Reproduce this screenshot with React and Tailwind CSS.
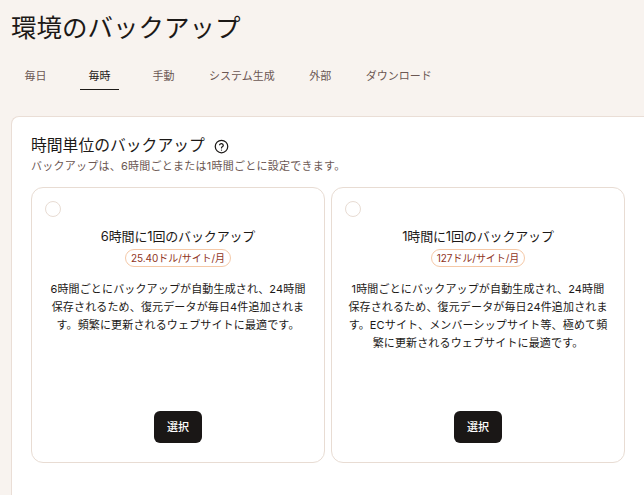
import React from "react";

const font = "font-['Inter','Noto_Sans_CJK_JP',sans-serif]";

const tabs = ["毎日", "毎時", "手動", "システム生成", "外部", "ダウンロード"];

const plans = [
  {
    title: "6時間に1回のバックアップ",
    price: "25.40ドル/サイト/月",
    text: "6時間ごとにバックアップが自動生成され、24時間保存されるため、復元データが毎日4件追加されます。頻繁に更新されるウェブサイトに最適です。",
  },
  {
    title: "1時間に1回のバックアップ",
    price: "127ドル/サイト/月",
    text: "1時間ごとにバックアップが自動生成され、24時間保存されるため、復元データが毎日24件追加されます。ECサイト、メンバーシップサイト等、極めて頻繁に更新されるウェブサイトに最適です。",
  },
];

const HelpIcon = () => (
  <svg width="15" height="15" viewBox="0 0 24 24" fill="none" stroke="#1c1917" strokeWidth="2" strokeLinecap="round" strokeLinejoin="round">
    <circle cx="12" cy="12" r="10" />
    <path d="M9 9.2a3 3 0 0 1 5.8 1c0 2-2.8 2.4-2.8 4" />
    <path d="M12 17.6h.01" />
  </svg>
);

const PlanCard = ({ plan }) => (
  <div className="flex h-[276px] w-[294px] flex-col items-center rounded-xl border border-[#e8dcd3] bg-white px-4 pb-[19px] pt-[13px]">
    <div className="ml-[-3px] h-4 w-4 self-start rounded-full border border-[#e8dcd3]"></div>
    <h3 className="mt-[10px] text-[13px] leading-[18px] tracking-[-0.15px] text-[#1c1917]">{plan.title}</h3>
    <span className="mt-[4px] flex h-[18px] items-center rounded-full border border-[#f5c9a8] px-[5px] text-[10px] tracking-[-0.05px] text-[#8f3423]">
      {plan.price}
    </span>
    <p className="mt-[13px] text-center text-[11px] leading-[18px] tracking-[0.15px] text-[#1c1917]">{plan.text}</p>
    <button className="mt-auto h-8 w-12 rounded-md bg-[#1a1716] text-[11px] font-medium text-white">選択</button>
  </div>
);

export default function App() {
  return (
    <div className={`${font} h-[495px] w-[644px] overflow-hidden bg-[#f8f3ef]`}>
      <h1 className="pl-[11px] pt-[12px] text-[25.5px] leading-[32px] text-[#1c1917]">環境のバックアップ</h1>

      <div className="mt-[10px] flex gap-[25px] pl-[16px]">
        {tabs.map((tab) => (
          <div
            key={tab}
            className={
              tab === "毎時"
                ? "h-[36px] min-w-[39px] border-b-[1.5px] border-[#1c1917] px-px pt-[14px] text-center text-[11px] leading-[16px] text-[#1c1917]"
                : "h-[36px] min-w-[39px] px-px pt-[14px] text-center text-[11px] leading-[16px] text-[#6b5753]"
            }
          >
            {tab}
          </div>
        ))}
      </div>

      <div className="ml-[11px] mt-[26px] h-[400px] rounded-tl-lg border-l border-t border-[#eaded6] bg-white pl-[19px] pt-[18px]">
        <div className="flex items-center gap-[9px]">
          <h2 className="text-[15.8px] leading-[22px] text-[#1c1917]">時間単位のバックアップ</h2>
          <HelpIcon />
        </div>
        <p className="text-[11px] leading-[18px] tracking-[0.25px] text-[#6b5753]">バックアップは、6時間ごとまたは1時間ごとに設定できます。</p>
        <div className="mt-[12px] flex gap-[6px]">
          {plans.map((plan) => (
            <PlanCard key={plan.title} plan={plan} />
          ))}
        </div>
      </div>
    </div>
  );
}
